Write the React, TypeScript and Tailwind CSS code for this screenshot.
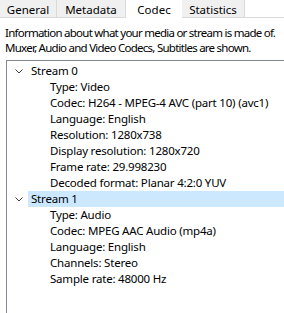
import React from 'react';

type Row = {
  text: string;
  stream?: boolean;
  selected?: boolean;
};

const rows: Row[] = [
  { text: 'Stream 0', stream: true },
  { text: 'Type: Video' },
  { text: 'Codec: H264 - MPEG-4 AVC (part 10) (avc1)' },
  { text: 'Language: English' },
  { text: 'Resolution: 1280x738' },
  { text: 'Display resolution: 1280x720' },
  { text: 'Frame rate: 29.998230' },
  { text: 'Decoded format: Planar 4:2:0 YUV' },
  { text: 'Stream 1', stream: true, selected: true },
  { text: 'Type: Audio' },
  { text: 'Codec: MPEG AAC Audio (mp4a)' },
  { text: 'Language: English' },
  { text: 'Channels: Stereo' },
  { text: 'Sample rate: 48000 Hz' },
];

const tabs = [
  { label: 'General', width: 'w-[57px]' },
  { label: 'Metadata', width: 'w-[69px]' },
  { label: 'Codec', width: 'w-[56px]', active: true },
  { label: 'Statistics', width: 'w-[63px]' },
];

function Chevron() {
  return (
    <svg width="8" height="5" viewBox="0 0 8 5" className="block">
      <path d="M0.5 0.5 L4 4 L7.5 0.5" fill="none" stroke="#404040" strokeWidth="1" />
    </svg>
  );
}

export default function App() {
  return (
    <div
      className="w-[284px] h-[313px] bg-white overflow-hidden text-[11.5px] text-black"
      style={{ fontFamily: '"Noto Sans", sans-serif' }}
    >
      <div className="flex h-[18px]">
        {tabs.map((tab) =>
          tab.active ? (
            <div
              key={tab.label}
              className={`${tab.width} flex items-center justify-center bg-white pt-[1px]`}
            >
              {tab.label}
            </div>
          ) : (
            <div
              key={tab.label}
              className={`${tab.width} flex items-center justify-center bg-[#f0f0f0] border-r border-b border-[#d9d9d9] pt-[3px]`}
            >
              {tab.label}
            </div>
          )
        )}
        <div className="flex-1 border-b border-[#d9d9d9]" />
      </div>

      <div className="px-[5px] pt-[7px] leading-[15px] whitespace-nowrap tracking-[-0.75px]">
        <p>Information about what your media or stream is made of.</p>
        <p>Muxer, Audio and Video Codecs, Subtitles are shown.</p>
      </div>

      <div className="ml-[6px] mt-[5px] h-full border-l border-t border-[#828790] pt-[2px] tracking-[-0.2px]">
        {rows.map((row, i) =>
          row.stream ? (
            <div key={i} className="flex items-center h-[16px]">
              <div className="w-[21px] flex justify-center pl-[3px]">
                <Chevron />
              </div>
              <div
                className={`h-full flex items-center pl-[3px] flex-1 ${
                  row.selected ? 'bg-[#cce8ff]' : ''
                }`}
              >
                {row.text}
              </div>
            </div>
          ) : (
            <div key={i} className="flex items-center h-[16px] pl-[43px] whitespace-nowrap">
              {row.text}
            </div>
          )
        )}
      </div>
    </div>
  );
}
